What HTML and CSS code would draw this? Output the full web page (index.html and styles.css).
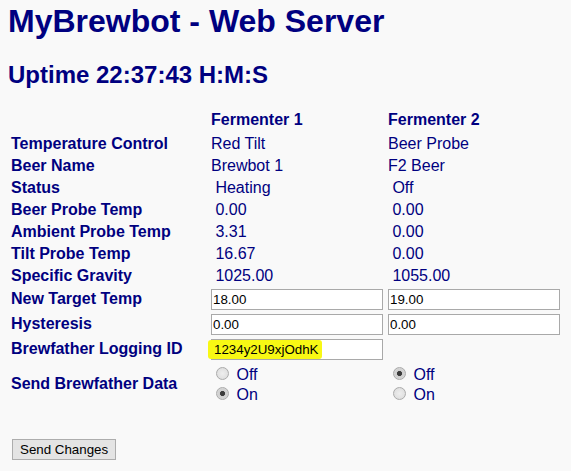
FILE: index.html
```html
<!DOCTYPE html>
<html>
<head>
<meta charset="utf-8">
<title>MyBrewbot - Web Server</title>
<link rel="stylesheet" href="styles.css">
</head>
<body>
<h1 class="title">MyBrewbot - Web Server</h1>
<h2 class="uptime">Uptime 22:37:43 H:M:S</h2>
<form class="form">
<table class="grid">
  <tr class="head">
    <th class="c1"></th>
    <th class="c2">Fermenter 1</th>
    <th class="c3">Fermenter 2</th>
  </tr>
  <tr>
    <th>Temperature Control</th>
    <td>Red Tilt</td>
    <td>Beer Probe</td>
  </tr>
  <tr>
    <th>Beer Name</th>
    <td>Brewbot 1</td>
    <td>F2 Beer</td>
  </tr>
  <tr>
    <th>Status</th>
    <td class="ind">Heating</td>
    <td class="ind">Off</td>
  </tr>
  <tr>
    <th>Beer Probe Temp</th>
    <td class="ind">0.00</td>
    <td class="ind">0.00</td>
  </tr>
  <tr>
    <th>Ambient Probe Temp</th>
    <td class="ind">3.31</td>
    <td class="ind">0.00</td>
  </tr>
  <tr>
    <th>Tilt Probe Temp</th>
    <td class="ind">16.67</td>
    <td class="ind">0.00</td>
  </tr>
  <tr>
    <th>Specific Gravity</th>
    <td class="ind">1025.00</td>
    <td class="ind">1055.00</td>
  </tr>
  <tr>
    <th>New Target Temp</th>
    <td><input class="field" type="text" value="18.00"></td>
    <td><input class="field" type="text" value="19.00"></td>
  </tr>
  <tr>
    <th>Hysteresis</th>
    <td><input class="field" type="text" value="0.00"></td>
    <td><input class="field" type="text" value="0.00"></td>
  </tr>
  <tr>
    <th>Brewfather Logging ID</th>
    <td><div class="field fake"><span class="mark">1234y2U9xjOdhK</span></div></td>
    <td></td>
  </tr>
  <tr>
    <th>Send Brewfather Data</th>
    <td><input class="radio" type="radio" name="bf1"> Off<br><input class="radio" type="radio" name="bf1" checked> On</td>
    <td><input class="radio" type="radio" name="bf2" checked> Off<br><input class="radio" type="radio" name="bf2"> On</td>
  </tr>
</table>
<button class="send" type="button">Send Changes</button>
</form>
</body>
</html>
```

FILE: styles.css
```css
html, body {
  background: #f9f9f9;
}
body {
  margin: 0;
  padding: 3px 8px 8px;
  font-family: "Liberation Sans", Arial, sans-serif;
  color: #000080;
}
.title {
  margin: 0;
  font-size: 32px;
  font-weight: bold;
}
.uptime {
  margin: 21px 0 19.4px;
  font-size: 24px;
  font-weight: bold;
}
.form {
  margin: 0;
}
.grid {
  width: 555px;
  border-spacing: 2px;
  font-size: 16px;
  line-height: 18px;
}
.grid th, .grid td {
  padding: 1px;
  text-align: left;
  vertical-align: middle;
}
.grid th {
  font-weight: bold;
}
.grid td {
  font-weight: normal;
}
.head th {
  padding-bottom: 2.6px;
}
.c1 { width: 196px; }
.c2 { width: 173px; }
.c3 { width: 172px; }
.grid td.ind {
  padding-left: 5.4px;
}
.field {
  box-sizing: border-box;
  display: block;
  width: 172px;
  height: 21px;
  margin: 0;
  padding: 0 1px;
  border: 1px solid #a9a9a9;
  background: #fff;
  font-family: "Liberation Sans", Arial, sans-serif;
  font-size: 13.33px;
  line-height: 19px;
  color: #000;
  outline: none;
}
.fake {
  white-space: nowrap;
  overflow: visible;
}
.mark {
  display: inline-block;
  margin: -4px 0 0 -5px;
  padding: 1px 4px 0 6px;
  line-height: 18px;
  background: #f8f814;
  border-radius: 3px;
}
.radio {
  -webkit-appearance: none;
  appearance: none;
  box-sizing: border-box;
  width: 13px;
  height: 13px;
  margin: 3px 3px 0 5px;
  border: 1px solid #ababab;
  border-radius: 50%;
  background: radial-gradient(circle, #eeeeee 0, #e2e2e2 60%, #d6d6d6 100%);
  vertical-align: baseline;
}
.radio:checked {
  background: radial-gradient(circle, #3c3c3c 0, #3c3c3c 2.2px, #cfcfcf 2.9px, #dcdcdc 100%);
}
.send {
  display: block;
  box-sizing: border-box;
  height: 21px;
  margin: 32px 0 0 4px;
  padding: 0 7px;
  border: 1px solid #adadad;
  background: #e4e4e4;
  font-family: "Liberation Sans", Arial, sans-serif;
  font-size: 13.33px;
  color: #000;
}
```
